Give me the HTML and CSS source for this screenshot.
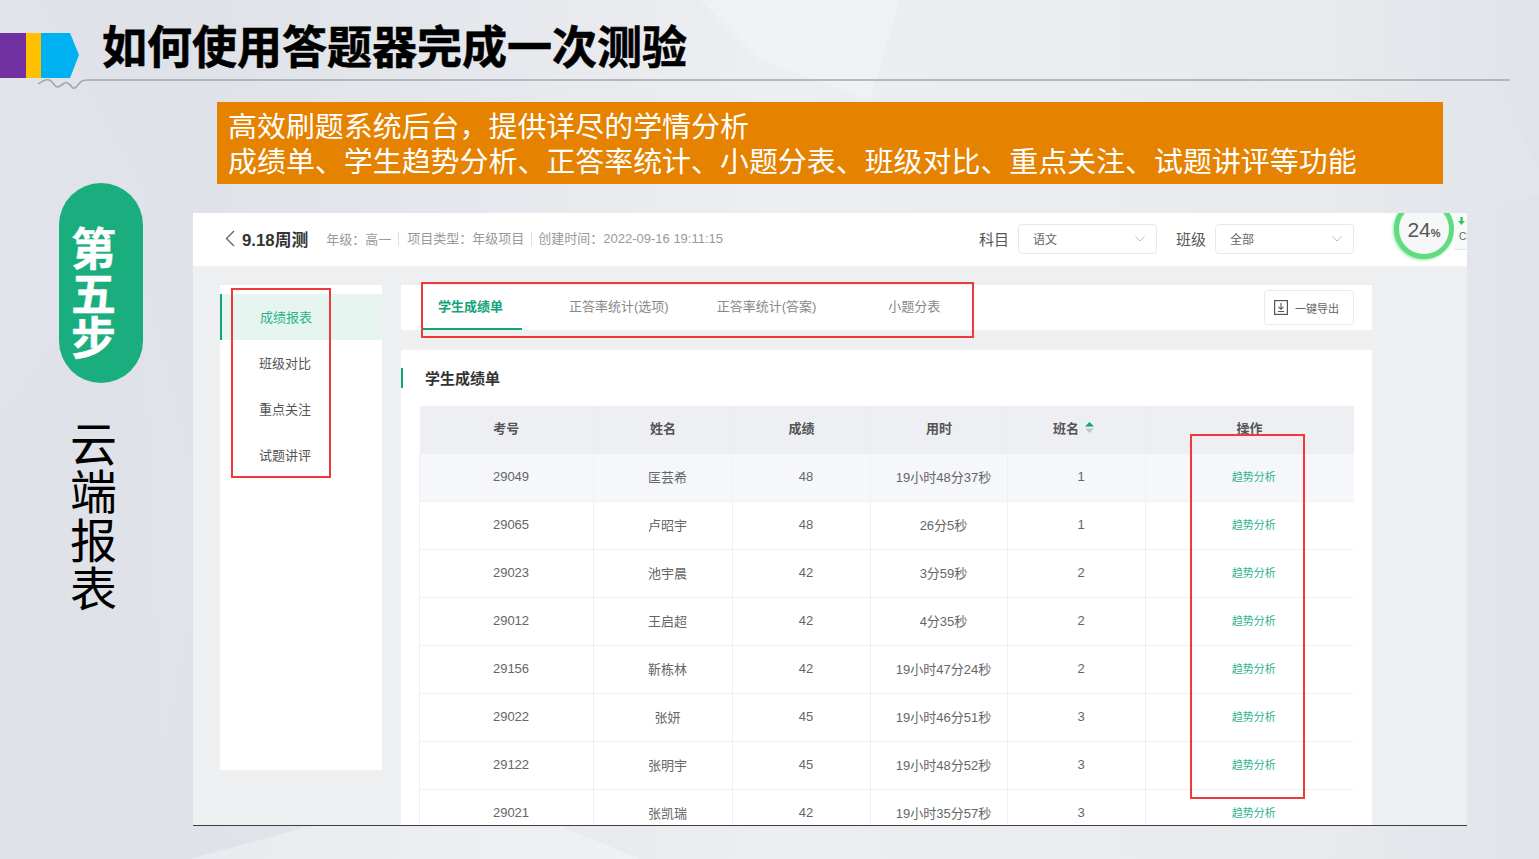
FILE: index.html
```html
<!DOCTYPE html>
<html lang="zh-CN">
<head>
    <meta charset="UTF-8">
    <title>如何使用答题器完成一次测验</title>
    <link rel="stylesheet" href="styles.css">
</head>
<body>
    <div class="slide">
        <svg class="slide-bg" width="1539" height="859" viewBox="0 0 1539 859">
            <defs>
                <linearGradient id="bg" x1="0" y1="0" x2="1" y2="0">
                    <stop offset="0" stop-color="#dfe2e8"/>
                    <stop offset="0.13" stop-color="#dfe2e8"/>
                    <stop offset="0.5" stop-color="#eceef1"/>
                    <stop offset="0.86" stop-color="#e8eaee"/>
                    <stop offset="1" stop-color="#e0e3e8"/>
                </linearGradient>
            </defs>
            <rect width="1539" height="859" fill="url(#bg)"/>
            <polygon points="0,0 40,0 150,200 0,420" fill="#fff" opacity=".06"/>
            <polygon points="140,260 193,470 193,620 160,760" fill="#fff" opacity=".06"/>
            <polygon points="700,0 900,0 870,100 760,60" fill="#fff" opacity=".25"/>
            <polygon points="1467,40 1490,70 1539,170 1539,195 1467,215" fill="#fff" opacity=".07"/>
            <polygon points="190,859 310,826 560,826 640,859" fill="#fff" opacity=".3"/>
        </svg>

        <header class="head">
            <svg class="head-mark" width="79" height="45" viewBox="0 0 79 45">
                <rect width="26" height="45" fill="#7030a0"/>
                <rect x="26" width="15" height="45" fill="#ffc000"/>
                <polygon points="41,0 70,0 79,22 70,45 41,45" fill="#00b0f0"/>
            </svg>
            <h1 class="head-title">如何使用答题器完成一次测验</h1>
            <svg class="head-line" width="1539" height="24" viewBox="0 0 1539 24">
                <path d="M27 14c5-3 9-6 13-3s4 8 9 5 5-5 9-2 3 6 7 3 3-7 12-7H1499" fill="none" stroke="#a6a7a9" stroke-width="1.6"/>
            </svg>
        </header>

        <div class="main">
            <aside class="step">
                <div class="step-pill">第五步</div>
                <div class="step-label">云端报表</div>
            </aside>

            <div class="stage">
                <div class="banner">
                    <p>高效刷题系统后台，提供详尽的学情分析</p>
                    <p>成绩单、学生趋势分析、正答率统计、小题分表、班级对比、重点关注、试题讲评等功能</p>
                </div>

                <div class="window">
                    <div class="topbar">
                        <svg class="back" width="10" height="17" viewBox="0 0 10 17"><path d="M9 1 1.500 8.500 9 16" fill="none" stroke="#666" stroke-width="1.4"/></svg>
                        <span class="exam-name">9.18周测</span>
                        <span class="meta">年级：高一</span>
                        <span class="meta meta-split">项目类型：年级项目</span>
                        <span class="meta meta-split">创建时间：2022-09-16 19:11:15</span>
                        <div class="filters">
                            <label class="filter-name">科目</label>
                            <div class="select">语文<svg width="10" height="6" viewBox="0 0 10 6"><path d="M.5 .5 5 5 9.500 .5" fill="none" stroke="#b9bdc6"/></svg></div>
                            <label class="filter-name">班级</label>
                            <div class="select">全部<svg width="10" height="6" viewBox="0 0 10 6"><path d="M.5 .5 5 5 9.500 .5" fill="none" stroke="#b9bdc6"/></svg></div>
                        </div>
                    </div>

                    <div class="speed">
                        <div class="speed-ring">24<small>%</small></div>
                        <div class="speed-side"><svg width="7" height="8" viewBox="0 0 7 8"><path d="M3.500 8 0 4h2.300V0h2.400v4H7z" fill="#36c45c"/></svg><span>CP</span></div>
                    </div>

                    <div class="workspace">
                        <nav class="sidenav">
                            <a class="sidenav-item active">成绩报表</a>
                            <a class="sidenav-item">班级对比</a>
                            <a class="sidenav-item">重点关注</a>
                            <a class="sidenav-item">试题讲评</a>
                        </nav>

                        <div class="content">
                            <div class="tabs">
                                <a class="tab tab-active">学生成绩单</a>
                                <a class="tab tab-a">正答率统计(选项)</a>
                                <a class="tab tab-b">正答率统计(答案)</a>
                                <a class="tab tab-c">小题分表</a>
                                <button class="export">
                                    <svg width="14" height="15" viewBox="0 0 14 15"><rect x=".6" y=".6" width="12.800" height="13.800" fill="none" stroke="#555" stroke-width="1.200"/><path d="M7 3v6M4.500 6.800 7 9.300l2.500-2.500M4 11.500h6" fill="none" stroke="#555" stroke-width="1.100"/></svg>
                                    一键导出
                                </button>
                            </div>

                            <div class="panel">
                                <h2 class="panel-title">学生成绩单</h2>
                                <table class="grade-table">
                                    <colgroup>
                                        <col class="c1"><col class="c2"><col class="c3"><col class="c4"><col class="c5"><col class="c6">
                                    </colgroup>
                                    <thead>
                                        <tr>
                                            <th>考号</th><th>姓名</th><th>成绩</th><th>用时</th>
                                            <th><span class="th-sort">班名<svg width="9" height="11" viewBox="0 0 9 11"><path d="M4.500 0 9 4.500H0z" fill="#12a37a"/><path d="M4.500 11 9 6.500H0z" fill="#c0c4cc"/></svg></span></th>
                                            <th>操作</th>
                                        </tr>
                                    </thead>
                                    <tbody>
                                        <tr class="row-hover"><td>29049</td><td>匡芸希</td><td>48</td><td>19小时48分37秒</td><td>1</td><td class="op">趋势分析</td></tr>
                                        <tr><td>29065</td><td>卢昭宇</td><td>48</td><td>26分5秒</td><td>1</td><td class="op">趋势分析</td></tr>
                                        <tr><td>29023</td><td>池宇晨</td><td>42</td><td>3分59秒</td><td>2</td><td class="op">趋势分析</td></tr>
                                        <tr><td>29012</td><td>王启超</td><td>42</td><td>4分35秒</td><td>2</td><td class="op">趋势分析</td></tr>
                                        <tr><td>29156</td><td>靳栋林</td><td>42</td><td>19小时47分24秒</td><td>2</td><td class="op">趋势分析</td></tr>
                                        <tr><td>29022</td><td>张妍</td><td>45</td><td>19小时46分51秒</td><td>3</td><td class="op">趋势分析</td></tr>
                                        <tr><td>29122</td><td>张明宇</td><td>45</td><td>19小时48分52秒</td><td>3</td><td class="op">趋势分析</td></tr>
                                        <tr><td>29021</td><td>张凯瑞</td><td>42</td><td>19小时35分57秒</td><td>3</td><td class="op">趋势分析</td></tr>
                                    </tbody>
                                </table>
                            </div>
                        </div>
                    </div>

                    <div class="mark mark-nav"></div>
                    <div class="mark mark-tabs"></div>
                    <div class="mark mark-ops"></div>
                </div>
            </div>
        </div>
    </div>
</body>
</html>
```

FILE: styles.css
```css
:root{
    --green:#12a37a;
    --step-green:#1aae7f;
    --red:#f0393c;
    --line:#eff0f4;
    --app-bg:#eeeff1;
}
*{
    box-sizing: border-box;
}
body{
    margin: 0;
    background: #e9ebef;
    font-family: "Liberation Sans", "Noto Sans CJK SC", sans-serif;
}
.slide{
    width: 1539px;
    height: 859px;
    position: relative;
    overflow: hidden;
}
.slide-bg{
    position: absolute;
    top: 0;
    left: 0;
}

/* slide header */
.head{
    height: 81px;
    display: flex;
    align-items: flex-start;
    position: relative;
}
.head-mark{
    margin-top: 33px;
    flex: none;
}
.head-title{
    margin: 18px 0 0 23px;
    font-family: "Noto Sans CJK SC", sans-serif;
    font-size: 45px;
    line-height: 54px;
    font-weight: 700;
    color: #000;
    white-space: nowrap;
    -webkit-text-stroke: 0.6px #000;
}
.head-line{
    position: absolute;
    left: 11px;
    top: 70px;
}

.main{
    display: flex;
    padding-left: 59px;
    position: relative;
}

/* left step column */
.step{
    width: 84px;
    flex: none;
    margin-top: 102px;
}
.step-pill{
    height: 200px;
    width: 84px;
    border-radius: 42px;
    background: var(--step-green);
    color: #fff;
    font-family: "Noto Sans CJK SC", sans-serif;
    font-size: 45px;
    font-weight: 700;
    line-height: 44.500px;
    padding: 42px 0 0 12px;
    -webkit-text-stroke: 0.4px #fff;
}
.step-pill,
.step-label{
    word-break: break-all;
}
.step-label{
    margin-top: 34px;
    padding: 0 26px 0 11px;
    font-family: "Noto Sans CJK SC", sans-serif;
    font-size: 47px;
    line-height: 48.300px;
    color: #000;
}

.stage{
    margin-left: 50px;
    width: 1274px;
}
.banner{
    margin: 21px 0 0 24px;
    width: 1226px;
    height: 82px;
    background: #e58200;
    color: #fff;
    padding: 5px 0 0 11px;
    font-family: "Noto Sans CJK SC", sans-serif;
    font-size: 28.950px;
    line-height: 35px;
    white-space: nowrap;
}
.banner p{
    margin: 0;
}

/* app screenshot */
.window{
    margin-top: 29px;
    height: 613px;
    background: var(--app-bg);
    border-bottom: 1px solid #3c3e44;
    overflow: hidden;
    position: relative;
}
.topbar{
    height: 53px;
    background: #fff;
    display: flex;
    align-items: center;
    padding: 0 113px 2px 32px;
}
.back{
    flex: none;
    margin-right: 7px;
}
.exam-name{
    font-size: 16.800px;
    font-weight: 700;
    color: #333;
    margin-right: 18px;
    white-space: nowrap;
}
.meta{
    font-size: 13px;
    color: #999;
    white-space: nowrap;
}
.meta-split{
    margin-left: 7px;
    padding-left: 8px;
    border-left: 1px solid #dcdfe6;
    line-height: 14px;
}
.meta-split + .meta-split{
    padding-left: 6px;
}
.filters{
    margin-left: auto;
    display: flex;
    align-items: center;
}
.filter-name{
    font-size: 15px;
    color: #555;
    margin: 0 9px 0 19px;
}
.select{
    width: 139px;
    height: 30px;
    border: 1px solid #e6e8ee;
    border-radius: 4px;
    font-size: 12px;
    color: #666;
    display: flex;
    align-items: center;
    justify-content: space-between;
    padding: 0 11px 0 14px;
}

/* little speed widget that sits over the page */
.speed{
    position: absolute;
    top: -14px;
    left: 1201px;
    display: flex;
}
.speed-ring{
    width: 60px;
    height: 60px;
    border-radius: 50%;
    border: 5px solid #5fdc80;
    background: #f6f7f7;
    box-shadow: -1px 1px 3px #8de8a5;
    color: #555;
    font-size: 21px;
    text-align: center;
    line-height: 52px;
}
.speed-ring small{
    font-size: 11px;
    font-weight: 700;
}
.speed-side{
    width: 13px;
    height: 51px;
    background: #f8f9f9;
    border-bottom: 1px solid #e4e5e7;
    font-size: 10px;
    color: #666;
    overflow: hidden;
    padding: 18px 0 0 4px;
    white-space: nowrap;
}
.speed-side svg{
    display: block;
}
.speed-side span{
    display: block;
    margin: 6px 0 0 1px;
}

.workspace{
    display: flex;
    padding: 19px 0 0 27px;
    align-items: flex-start;
}
.sidenav{
    width: 162px;
    height: 485px;
    flex: none;
    background: #fff;
    padding-top: 9px;
}
.sidenav-item{
    display: block;
    height: 46px;
    line-height: 48px;
    text-align: center;
    font-size: 13px;
    color: #555;
    padding-right: 32px;
}
.sidenav-item.active{
    background: #e6f5f0;
    border-left: 2px solid var(--green);
    color: #29b38d;
}
.content{
    margin-left: 19px;
    width: 971px;
}
.tabs{
    height: 45px;
    background: #fff;
    display: flex;
    align-items: center;
    position: relative;
    padding-left: 20px;
}
.tab{
    height: 45px;
    line-height: 44px;
    font-size: 13px;
    color: #888;
    white-space: nowrap;
}
.tab-active{
    color: var(--green);
    font-weight: 700;
    width: 101px;
    padding-left: 17px;
    border-bottom: 2px solid var(--green);
}
.tab-a{
    margin-left: 47px;
}
.tab-b{
    margin-left: 48px;
}
.tab-c{
    margin-left: 72px;
}
.export{
    margin: 0 18px 0 auto;
    width: 90px;
    height: 35px;
    background: #fff;
    border: 1px solid #e8eaee;
    border-radius: 3px;
    font-family: inherit;
    font-size: 11px;
    color: #666;
    display: flex;
    align-items: center;
    gap: 7px;
    padding: 0 0 0 9px;
}

.panel{
    margin-top: 20px;
    background: #fff;
    padding: 0 19px 0 18px;
    position: relative;
}
.panel-title{
    margin: 0;
    height: 56px;
    line-height: 58px;
    font-size: 15px;
    font-weight: 700;
    color: #333;
    padding-left: 6px;
}
.panel-title::before{
    content: "";
    position: absolute;
    left: 0;
    top: 18px;
    width: 2px;
    height: 20px;
    background: var(--green);
}
.grade-table{
    width: 934px;
    table-layout: fixed;
    border-collapse: collapse;
}
.c1{width:174px;}
.c2{width:139px;}
.c3{width:138px;}
.c4{width:137px;}
.c5{width:138px;}
.c6{width:208px;}
.grade-table th{
    height: 48px;
    background: #eeeff2;
    font-size: 13px;
    color: #555;
    font-weight: 700;
    padding: 0 0 6px;
    border-right: 1px solid #ecedf0;
}
.grade-table td{
    height: 48px;
    font-size: 13px;
    color: #666;
    text-align: center;
    padding: 0 0 2px 9px;
    border-right: 1px solid var(--line);
    border-bottom: 1px solid var(--line);
}
.grade-table td:first-child{
    border-left: 1px solid var(--line);
}
.row-hover td{
    height: 47px;
    background: #f5f7fa;
}
.grade-table td.op{
    font-size: 11px;
    color: #2cb38d;
    padding-left: 8px;
    border-right: 0;
}
.th-sort{
    display: inline-flex;
    align-items: center;
    gap: 6px;
    margin-left: -6px;
}

/* red callouts drawn over the screenshot */
.mark{
    position: absolute;
    border: 2px solid var(--red);
}
.mark-nav{
    left: 38px;
    top: 75px;
    width: 100px;
    height: 190px;
}
.mark-tabs{
    left: 228px;
    top: 69px;
    width: 553px;
    height: 56px;
}
.mark-ops{
    left: 997px;
    top: 221px;
    width: 115px;
    height: 365px;
}
```
